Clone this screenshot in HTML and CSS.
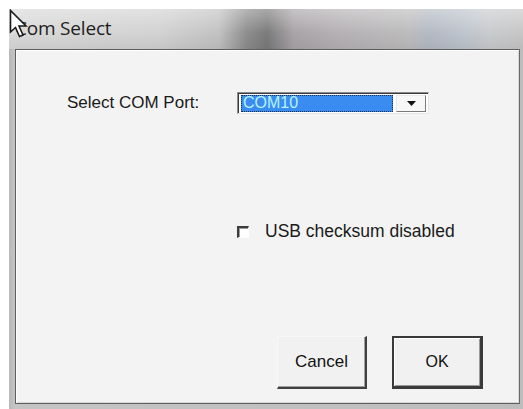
FILE: index.html
```html
<!DOCTYPE html>
<html lang="en">
<head>
<meta charset="utf-8">
<title>Com Select</title>
<link rel="stylesheet" href="styles.css">
</head>
<body>
<div class="window">
  <div class="titlebar">
    <span class="title">Com Select</span>
    <svg class="pointer" width="20" height="30" viewBox="0 0 20 30">
      <path d="M1.5 1.5 L1.5 23 L6.5 18.5 L10.5 27.5 L14 26 L10 17 L17 17 Z" fill="#ffffff" stroke="#1a1a1a" stroke-width="1.6" stroke-linejoin="miter"/>
    </svg>
  </div>
  <div class="client">
    <div class="port-row">
      <span class="label">Select COM Port:</span>
      <div class="combo">
        <span class="combo-value">COM10</span>
        <span class="combo-button">
          <svg width="9" height="5" viewBox="0 0 9 5"><path d="M0 0 H9 L4.5 5 Z" fill="#111"/></svg>
        </span>
      </div>
    </div>
    <div class="check-row">
      <span class="checkbox"></span>
      <span class="check-text">USB checksum disabled</span>
    </div>
    <div class="buttons">
      <button class="btn">Cancel</button>
      <button class="btn btn-default">OK</button>
    </div>
  </div>
</div>
</body>
</html>
```
FILE: styles.css
```css
html, body {
  margin: 0;
  padding: 0;
  background: #ffffff;
}

body {
  width: 523px;
  height: 409px;
  overflow: hidden;
  padding: 9px 0 0 9px;
  box-sizing: border-box;
}

.window {
  width: 514px;
  height: 400px;
  display: flex;
  flex-direction: column;
  background: linear-gradient(90deg, #b9b9b9 0px, #c4c4c4 6px, #bdbdbd 100%);
}

.titlebar {
  position: relative;
  height: 40px;
  flex: none;
  display: flex;
  align-items: center;
  padding-left: 6px;
  background:
    linear-gradient(180deg, rgba(255,255,255,0.35) 0%, rgba(255,255,255,0) 60%, rgba(0,0,0,0.06) 100%),
    linear-gradient(90deg, #d9d9d9 0px, #d2d2d2 150px, #c2c2c2 210px, #8d8d8d 238px, #7b7b7b 258px, #a9a4a8 285px, #b5b1b4 330px, #bdbcbd 400px, #b4bac4 420px, #bcc3cc 450px, #c9cbcd 480px, #c6c6c6 514px);
}

.title {
  font-family: "Open Sans", "DejaVu Sans", sans-serif;
  font-size: 19px;
  color: #1e1e1e;
  margin-top: -3px;
  letter-spacing: -0.2px;
}

.pointer {
  position: absolute;
  left: 0;
  top: 0;
}

.client {
  flex: 1;
  margin: 0 3px 5px 6px;
  border: 1px solid #5e5e5e;
  border-right-color: #6a6a6a;
  box-shadow: inset 1px 1px 0 #ffffff, inset -1px -1px 0 #d8d8d8;
  background: #f3f3f3;
  display: flex;
  flex-direction: column;
  padding: 42px 0 14px 0;
  font-family: "Liberation Sans", Arial, sans-serif;
  color: #1a1a1a;
}

.port-row {
  display: flex;
  align-items: center;
  padding-left: 51px;
}

.label {
  font-size: 17px;
  width: 170px;
  flex: none;
}

.combo {
  width: 192px;
  height: 22px;
  box-sizing: border-box;
  border: 1px solid #8c8c8c;
  border-right-color: #e6e6e6;
  border-bottom-color: #e6e6e6;
  box-shadow: inset 1px 1px 0 #3a3a3a;
  background: #ffffff;
  display: flex;
  align-items: stretch;
  padding: 2px 2px 1px 3px;
}

.combo-value {
  flex: 1;
  background: #3a8cf0;
  color: #b6f4ff;
  font-size: 16px;
  line-height: 16px;
  padding-left: 2px;
  outline: 1px dotted #1b2a44;
  outline-offset: -1px;
}

.combo-button {
  width: 28px;
  margin-left: 3px;
  display: flex;
  align-items: center;
  justify-content: center;
  background: #f7f7f7;
  border-top: 1px solid #e8e8e8;
  border-left: 1px solid #e8e8e8;
  border-right: 1px solid #7a7a7a;
  border-bottom: 1px solid #7a7a7a;
}

.check-row {
  display: flex;
  align-items: center;
  margin-top: 107px;
  padding-left: 221px;
}

.checkbox {
  width: 12px;
  height: 12px;
  box-sizing: border-box;
  border-top: 2px solid #3c3c3c;
  border-left: 2px solid #3c3c3c;
  border-right: 1px solid #ffffff;
  border-bottom: 1px solid #ffffff;
  background: #ffffff;
  box-shadow: inset 1px 1px 0 #9a9a9a;
}

.check-text {
  font-size: 17.5px;
  margin-left: 16px;
}

.buttons {
  margin-top: auto;
  display: flex;
  justify-content: flex-end;
  gap: 25px;
  padding-right: 36px;
}

.btn {
  height: 53px;
  font-family: "Liberation Sans", Arial, sans-serif;
  font-size: 17px;
  color: #111;
  background: #f1f1f1;
  border: 1px solid #f8f8f8;
  border-right: 2px solid #404040;
  border-bottom: 2px solid #404040;
  box-shadow: inset -1px -1px 0 #a0a0a0;
  padding: 0;
  width: 90px;
  border-radius: 0;
}

.btn-default {
  width: 91px;
  font-size: 16px;
  border: 2px solid #3a3a3a;
  border-right: 3px solid #3a3a3a;
  border-bottom: 3px solid #3a3a3a;
  box-shadow: inset 1px 1px 0 #ffffff, inset -1px -1px 0 #9a9a9a;
}
```
